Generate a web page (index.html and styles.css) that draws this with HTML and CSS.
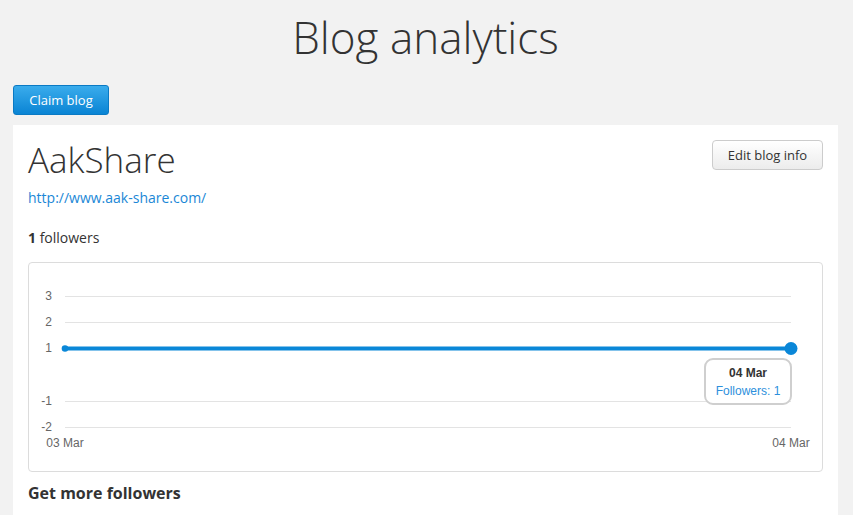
FILE: index.html
```html
<!DOCTYPE html>
<html>
<head>
<meta charset="utf-8">
<link rel="stylesheet" href="styles.css">
</head>
<body>
<h1 class="page-title">Blog analytics</h1>
<div class="actions"><button class="btn btn-primary">Claim blog</button></div>
<section class="card">
  <div class="card-head">
    <h2 class="blog-name">AakShare</h2>
    <button class="btn btn-default">Edit blog info</button>
  </div>
  <a class="blog-url" href="#">http://www.aak-share.com/</a>
  <p class="followers"><b>1</b> followers</p>
  <div class="chart">
    <svg class="chart-svg" width="792" height="207" viewBox="0 0 792 207">
      <g class="grid">
        <line x1="36" x2="762" y1="33.5" y2="33.5"/>
        <line x1="36" x2="762" y1="59.5" y2="59.5"/>
        <line x1="36" x2="762" y1="85.5" y2="85.5"/>
        <line x1="36" x2="762" y1="138.5" y2="138.5"/>
        <line x1="36" x2="762" y1="164.5" y2="164.5"/>
      </g>
      <g class="ylabels">
        <text x="23" y="37">3</text>
        <text x="23" y="63">2</text>
        <text x="23" y="89">1</text>
        <text x="23" y="142">-1</text>
        <text x="23" y="168">-2</text>
      </g>
      <g class="xlabels">
        <text x="36" y="184">03 Mar</text>
        <text x="762" y="184">04 Mar</text>
      </g>
      <line class="series" x1="36" x2="762" y1="85.5" y2="85.5"/>
      <circle class="dot" cx="36" cy="85.5" r="3.3"/>
      <circle class="dot" cx="762" cy="85.5" r="6.5"/>
      <rect class="tip" x="676" y="96" width="86" height="45" rx="8" ry="8"/>
      <text class="tip-date" x="719" y="114">04 Mar</text>
      <text class="tip-val" x="719" y="132">Followers: 1</text>
    </svg>
  </div>
  <h3 class="more">Get more followers</h3>
</section>
</body>
</html>
```
FILE: styles.css
```css
html, body {
  margin: 0;
  padding: 0;
  background: #f2f2f2;
}
body {
  padding: 0 15px 0 13px;
  font-family: "Open Sans", "Liberation Sans", sans-serif;
  color: #333;
  font-size: 14px;
  overflow: hidden;
}
.page-title {
  margin: 12px 0 0;
  height: 73px;
  font-size: 44px;
  line-height: 51px;
  font-weight: 300;
  text-align: center;
  color: #333;
}
.actions {
  height: 40px;
}
.btn {
  font-family: "Open Sans", "Liberation Sans", sans-serif;
  font-size: 13px;
  height: 30px;
  border-radius: 3px;
  cursor: pointer;
  line-height: 28px;
}
.btn-primary {
  width: 96px;
  color: #fff;
  border: 1px solid #0a7ac4;
  background: linear-gradient(#3aacec, #0a84d4);
  padding: 0;
}
.btn-default {
  width: 111px;
  padding: 0;
  color: #333;
  border: 1px solid #ccc;
  border-radius: 4px;
  background: linear-gradient(#ffffff, #ececec);
}
.card {
  background: #fff;
  padding: 15px 15px 20px;
}
.card-head {
  display: flex;
  justify-content: space-between;
  align-items: flex-start;
}
.blog-name {
  margin: 0;
  font-size: 35px;
  line-height: 40px;
  font-weight: 300;
  color: #333;
}
.blog-url {
  display: block;
  margin-top: 8px;
  line-height: 20px;
  color: #1a87d6;
  text-decoration: none;
}
.followers {
  margin: 20px 0 0;
  line-height: 20px;
}
.followers b {
  font-weight: 700;
}
.chart {
  margin-top: 14px;
  border: 1px solid #dcdcdc;
  border-radius: 4px;
  height: 208px;
  overflow: hidden;
}
.chart-svg {
  display: block;
  font-family: "Liberation Sans", Arial, sans-serif;
}
.grid line {
  stroke: #e3e3e3;
  stroke-width: 1;
}
.ylabels text {
  font-size: 12px;
  fill: #666;
  text-anchor: end;
}
.xlabels text {
  font-size: 12px;
  fill: #666;
  text-anchor: middle;
}
.series {
  stroke: #0a87d8;
  stroke-width: 4;
}
.dot {
  fill: #0a87d8;
}
.tip {
  fill: #fff;
  stroke: #cfcfcf;
  stroke-width: 2;
}
.tip-date {
  font-size: 12px;
  font-weight: bold;
  fill: #333;
  text-anchor: middle;
}
.tip-val {
  font-size: 12px;
  fill: #2d8fdc;
  text-anchor: middle;
}
.more {
  margin: 10px 0 0;
  font-size: 16px;
  line-height: 22px;
  font-weight: 700;
  color: #333;
}
```
